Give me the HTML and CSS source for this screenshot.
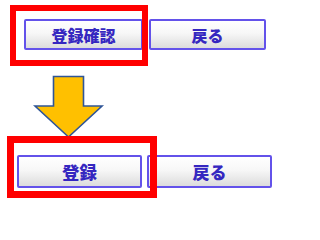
FILE: index.html
```html
<!DOCTYPE html>
<html lang="ja">
<head>
<meta charset="utf-8">
<link rel="stylesheet" href="styles.css">
</head>
<body>
<div class="page">
  <div class="row row-top">
    <button class="btn btn-a">登録確認</button>
    <button class="btn btn-b">戻る</button>
  </div>
  <svg class="arrow" width="72" height="64" viewBox="0 0 72 64">
    <polygon points="20.5,1.5 50.5,1.5 50.5,31 69,31 35.5,62 2,31 20.5,31" fill="#ffc000" stroke="#2f5597" stroke-width="1.6" stroke-linejoin="miter"/>
  </svg>
  <div class="row row-bottom">
    <button class="btn btn-c">登録</button>
    <button class="btn btn-d">戻る</button>
  </div>
  <div class="highlight hl-top"></div>
  <div class="highlight hl-bottom"></div>
</div>
</body>
</html>
```
FILE: styles.css
```css
html, body {
  margin: 0;
  padding: 0;
  background: #ffffff;
}
.page {
  position: relative;
  width: 296px;
  height: 207px;
  overflow: hidden;
}
.row {
  display: flex;
}
.row-top {
  padding: 19px 0 0 24px;
  gap: 6px;
}
.row-bottom {
  padding-left: 17px;
  margin-top: 16px;
  gap: 5px;
}
.btn {
  box-sizing: border-box;
  margin: 0;
  padding: 0;
  border: 2px solid #6352ea;
  border-radius: 2px;
  background: linear-gradient(to bottom, #ffffff 0%, #f7f7f7 45%, #dcdcdc 100%);
  color: #3527c0;
  font-family: "Noto Sans CJK JP", "Noto Sans", sans-serif;
  font-weight: 900;
  display: flex;
  align-items: center;
  justify-content: center;
  line-height: 1;
}
.btn-a { width: 119px; height: 31px; font-size: 16px; }
.btn-b { width: 117px; height: 31px; font-size: 16px; }
.btn-c { width: 125px; height: 33px; font-size: 17.5px; }
.btn-d { width: 125px; height: 33px; font-size: 17px; }
.arrow {
  display: block;
  margin: 25px 0 0 33px;
}
.highlight {
  position: absolute;
  box-sizing: border-box;
  border-style: solid;
  border-color: #ff0000;
}
.hl-top {
  left: 10px;
  top: 5px;
  width: 138px;
  height: 61px;
  border-width: 6px;
}
.hl-bottom {
  left: 7px;
  top: 136px;
  width: 150px;
  height: 62px;
  border-width: 7px;
}
```
